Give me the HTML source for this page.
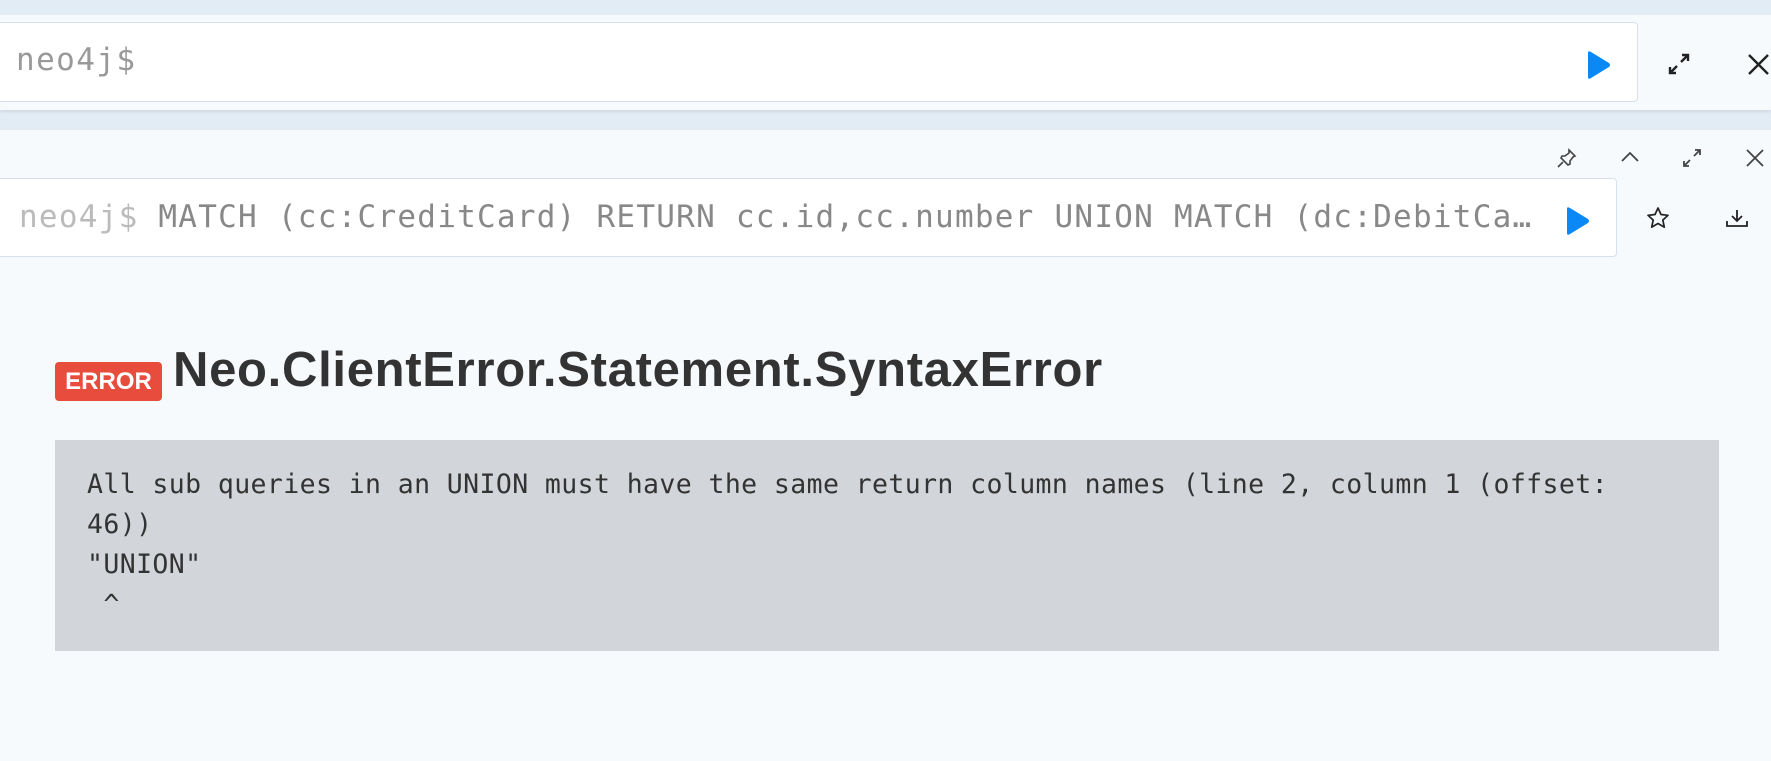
<!DOCTYPE html>
<html><head><meta charset="utf-8"><style>
*{margin:0;padding:0;box-sizing:border-box}
body{width:1771px;height:761px;background:#e2ecf5;position:relative;overflow:hidden;font-family:"Liberation Sans",sans-serif}
.panel{position:absolute;left:0;right:0;background:#f7fafd}
.box{position:absolute;left:-4px;background:#fff;border:1px solid #d6e1ec;border-radius:4px}
.mono{font-family:"DejaVu Sans Mono","Liberation Mono",monospace}
svg{position:absolute}
</style></head><body>
<div class="panel" style="top:15px;height:95px;box-shadow:0 2px 3px rgba(0,0,0,.08)"></div>
<div class="box" style="top:22px;width:1642px;height:80px"></div>
<div class="mono" style="position:absolute;left:16px;top:42px;font-size:31px;color:#999;letter-spacing:1.4px">neo4j$</div>
<svg style="left:1586px;top:50px" width="25" height="30" viewBox="0 0 25 30"><path d="M2 3Q2 0 5 2L23 13Q25 15 23 17L5 28Q2 30 2 27Z" fill="#0a88f5"/></svg>
<svg style="left:1667px;top:52px" width="24" height="24" viewBox="0 0 24 24" fill="none" stroke="#222" stroke-width="2.4"><path d="M14 10L21 3M15 3h6v6M10 14L3 21M3 15v6h6"/></svg>
<svg style="left:1747px;top:53px" width="23" height="23" viewBox="0 0 23 23" stroke="#222" stroke-width="2.4"><path d="M2 2L21 21M21 2L2 21"/></svg>

<div class="panel" style="top:130px;bottom:0"></div>
<svg style="left:1557px;top:148px" width="20" height="20" viewBox="0 0 20 20" fill="none" stroke="#444" stroke-width="1.6"><path d="M12 2l6 6-2 1-3 4 0 3-2 1-7-7 1-2 3 0 4-3zM6 14l-5 5"/></svg>
<svg style="left:1620px;top:150px" width="20" height="14" viewBox="0 0 20 14" fill="none" stroke="#444" stroke-width="1.8"><path d="M2 11L10 3L18 11"/></svg>
<svg style="left:1682px;top:148px" width="20" height="20" viewBox="0 0 20 20" fill="none" stroke="#444" stroke-width="1.8"><path d="M12 8L18 2M13 2h5v5M8 12L2 18M2 13v5h5"/></svg>
<svg style="left:1745px;top:148px" width="20" height="20" viewBox="0 0 20 20" stroke="#444" stroke-width="1.8"><path d="M2 2L18 18M18 2L2 18"/></svg>
<div class="box" style="top:178px;width:1621px;height:79px"></div>
<div class="mono" style="position:absolute;left:19px;top:199px;font-size:31px;color:#888;white-space:nowrap;letter-spacing:1.25px"><span style="color:#bbb">neo4j$</span> MATCH (cc:CreditCard) RETURN cc.id,cc.number UNION MATCH (dc:DebitCa…</div>
<svg style="left:1565px;top:206px" width="25" height="30" viewBox="0 0 25 30"><path d="M2 3Q2 0 5 2L23 13Q25 15 23 17L5 28Q2 30 2 27Z" fill="#0a88f5"/></svg>
<svg style="left:1646px;top:206px" width="24" height="24" viewBox="0 0 24 24" fill="none" stroke="#222" stroke-width="1.7" stroke-linejoin="round"><path d="M12 2l3 6.5 7 .8-5.2 4.8 1.5 7L12 17.5 5.7 21.1l1.5-7L2 9.3l7-.8z"/></svg>
<svg style="left:1725px;top:208px" width="24" height="20" viewBox="0 0 24 20" fill="none" stroke="#222" stroke-width="1.8"><path d="M12 2v11M7 8l5 5 5-5M2 13v5h20v-5"/></svg>

<div style="position:absolute;left:55px;top:362px;width:107px;height:39px;background:#e74c3c;border-radius:4px;color:#fff;font-weight:bold;font-size:24px;line-height:39px;text-align:center">ERROR</div>
<div style="position:absolute;left:173px;top:342px;font-size:49px;font-weight:bold;color:#333;white-space:nowrap;letter-spacing:0.7px">Neo.ClientError.Statement.SyntaxError</div>
<div class="mono" style="position:absolute;left:55px;top:440px;width:1664px;height:211px;background:#d2d5da;padding:25px 32px;font-size:26.5px;line-height:40px;color:#333;white-space:pre;letter-spacing:0.4px">All sub queries in an UNION must have the same return column names (line 2, column 1 (offset:
46))
"UNION"
 ^</div>
</body></html>
